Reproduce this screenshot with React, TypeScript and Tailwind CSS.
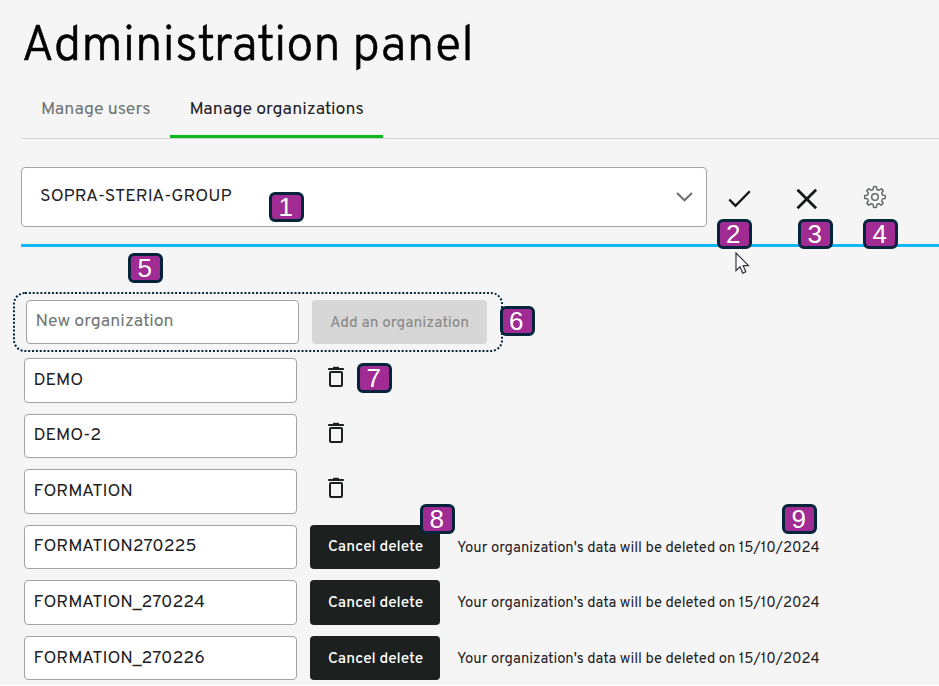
import type { ReactNode } from "react";

function Badge({ n, className }: { n: number; className: string }) {
  return (
    <span
      className={`absolute z-10 flex h-[30px] w-[35px] items-center justify-center rounded-[6px] border-3 border-[#03243a] bg-[#a02b93] pr-[1.5px] font-['Liberation_Sans',sans-serif] text-[26px] leading-none text-white ${className}`}
    >
      {n}
    </span>
  );
}

function Field({ children, className = "text-[#1d211f]" }: { children: ReactNode; className?: string }) {
  return (
    <div
      className={`flex h-[44.5px] w-[273.5px] shrink-0 items-center rounded-[4px] border border-[#a3a3a3] bg-white pt-[0.5px] pl-[9px] text-[17.78px] leading-none ${className}`}
    >
      {children}
    </div>
  );
}

function Trash() {
  return (
    <svg width="16" height="22" viewBox="0 0 16 22" fill="none" stroke="#1b1f1d" strokeWidth="2" className="-mt-1.5 ml-[31px]">
      <path d="M0.2 3h15.6" />
      <path d="M5 1.6h6" strokeWidth="1.6" />
      <rect x="2" y="6" width="12" height="14" rx="1" />
    </svg>
  );
}

const point = (radius: number, degrees: number) => {
  const a = (degrees * Math.PI) / 180;
  return `${(12 + radius * Math.cos(a)).toFixed(2)} ${(12 + radius * Math.sin(a)).toFixed(2)}`;
};

// Eight teeth, each with a flat tip and a rounded valley after it.
const GEAR =
  "M" +
  Array.from({ length: 8 }, (_, i) => {
    const c = i * 45;
    return `${point(8, c - 13)}L${point(10.3, c - 8)}Q${point(10.6, c)} ${point(10.3, c + 8)}L${point(8, c + 13)}Q${point(7.2, c + 22.5)} ${point(8, c + 32)}`;
  }).join("L") +
  "Z";

const ORGS = [
  { name: "DEMO" },
  { name: "DEMO-2" },
  { name: "FORMATION" },
  { name: "FORMATION270225", date: "15/10/2024" },
  { name: "FORMATION_270224", date: "15/10/2024" },
  { name: "FORMATION_270226", date: "15/10/2024" },
];

export default function App() {
  return (
    <div className="relative h-[686px] w-[939px] overflow-hidden bg-[#f5f5f5] font-['Overpass','Roboto',sans-serif] text-[#1d211f]">
      <h1 className="h-[80px] pt-[15px] pl-[21.5px] text-[49.2px] leading-[66px] font-light text-black [-webkit-text-stroke:0.5px_black]">
        Administration panel
      </h1>

      <nav className="ml-[21px] flex h-[59px] border-b border-[#d3d3d3] text-[17.78px]">
        <div className="flex w-[149px] items-center pt-[3px] pl-[20px] text-[#6f7371]">Manage users</div>
        <div className="flex w-[213px] items-center border-b-[3px] border-[#0bb81a] pt-[5px] pl-[19.5px]">
          Manage organizations
        </div>
      </nav>

      <div className="mt-[28px] ml-[21px] flex h-[60px]">
        <div className="flex w-[685.5px] items-center justify-between rounded-[4px] border border-[#a3a3a3] bg-white pr-[13px] pl-[18px] text-[17.78px] leading-none">
          <span>SOPRA-STERIA-GROUP</span>
          <svg width="17" height="10" viewBox="0 0 17 10" fill="none" stroke="#6a6e6c" strokeWidth="2">
            <path d="M1 1l7.5 7.3L16 1" />
          </svg>
        </div>
        <svg width="24" height="20" viewBox="0 0 24 20" fill="none" stroke="#111" strokeWidth="2.3" className="mt-[22px] ml-[21.5px]">
          <path d="M1.3 10.5l6.2 6.3L21.8 2.3" />
        </svg>
        <svg width="22" height="22" viewBox="0 0 22 22" fill="none" stroke="#161a18" strokeWidth="2.8" className="mt-[21px] ml-[43.5px]">
          <path d="M1.5 1.8l18.6 18.4M20.1 1.8L1.5 20.2" />
        </svg>
        <svg width="24" height="24" viewBox="0 0 24 24" fill="none" stroke="#666b69" strokeWidth="1.5" strokeLinejoin="round" className="mt-[18px] ml-[45.5px]">
          <circle cx="12" cy="12" r="3.3" />
          <path d={GEAR} />
        </svg>
      </div>

      <div className="mt-[17px] ml-[21px] h-[3px] bg-[#12b7f8]" />

      <div className="relative mt-[45px] ml-[13px] flex h-[60px] w-[490px] items-center">
        <svg width="490" height="60" className="absolute inset-0" fill="none" stroke="#03243a">
          <rect x="1" y="1" width="488" height="58" rx="11" strokeWidth="2" strokeDasharray="2 1.85" />
        </svg>
        <div className="relative ml-[12.5px] flex gap-[13px]">
          <Field className="text-[#737775]">New organization</Field>
          <button className="h-[44.5px] w-[175px] rounded-[4px] bg-[#d7d7d7] pt-[3px] text-[15.3px] leading-none font-medium text-[#8d8d8d]">
            Add an organization
          </button>
        </div>
      </div>

      <div className="mt-[6px] ml-[23.5px] flex flex-col gap-[11.1px]">
        {ORGS.map((o) => (
          <div key={o.name} className="flex h-[44.5px] items-center">
            <Field>{o.name}</Field>
            {o.date ? (
              <>
                <button className="ml-[13px] h-[44.5px] w-[130px] rounded-[4px] bg-[#1c201e] pt-[2px] pl-[1px] text-[15.4px] leading-none font-medium text-white">
                  Cancel delete
                </button>
                <span className="ml-[17px] pt-[4px] text-[14.8px] leading-none">
                  Your organization's data will be deleted on {o.date}
                </span>
              </>
            ) : (
              <Trash />
            )}
          </div>
        ))}
      </div>

      <div className="absolute inset-x-0 bottom-0 h-px bg-white" />

      <Badge n={1} className="top-[192px] left-[269px]" />
      <Badge n={2} className="top-[219px] left-[716.5px]" />
      <Badge n={3} className="top-[219px] left-[798px]" />
      <Badge n={4} className="top-[219px] left-[863px]" />
      <Badge n={5} className="top-[253px] left-[128px]" />
      <Badge n={6} className="top-[306px] left-[499.5px]" />
      <Badge n={7} className="top-[363px] left-[357px]" />
      <Badge n={8} className="top-[504px] left-[420px]" />
      <Badge n={9} className="top-[504px] left-[782px]" />

      <svg width="15" height="23" viewBox="0 0 15 23" className="absolute top-[252px] left-[735px]">
        <path d="M1 1v17.5l4-3.8 2.8 6.4 3-1.3-2.7-6.2h5.4z" fill="#fff" stroke="#34343f" strokeWidth="1.2" />
      </svg>
    </div>
  );
}
